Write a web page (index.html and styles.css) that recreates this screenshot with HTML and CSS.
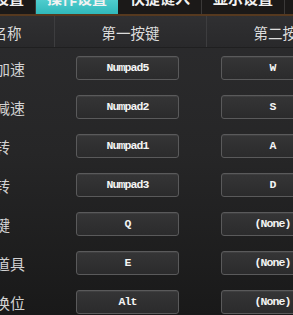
FILE: index.html
```html
<!DOCTYPE html>
<html lang="zh-CN">
<head>
    <meta charset="UTF-8">
    <title>操作设置</title>
    <link rel="stylesheet" href="styles.css">
</head>
<body>

    <div class="panel">

        <div class="tabs">
            <div class="tab">按键设置</div>
            <div class="tab active">操作设置</div>
            <div class="tab">快捷键入</div>
            <div class="tab">显示设置</div>
        </div>

        <div class="head">
            <div class="col name">按键名称</div>
            <div class="col">第一按键</div>
            <div class="col">第二按键</div>
        </div>

        <div class="rows">
            <div class="row">
                <div class="label">向前加速</div>
                <div class="key first"><span class="btn">Numpad5</span></div>
                <div class="key"><span class="btn">W</span></div>
            </div>
            <div class="row">
                <div class="label">向后减速</div>
                <div class="key first"><span class="btn">Numpad2</span></div>
                <div class="key"><span class="btn">S</span></div>
            </div>
            <div class="row">
                <div class="label">向左转</div>
                <div class="key first"><span class="btn">Numpad1</span></div>
                <div class="key"><span class="btn">A</span></div>
            </div>
            <div class="row">
                <div class="label">向右转</div>
                <div class="key first"><span class="btn">Numpad3</span></div>
                <div class="key"><span class="btn">D</span></div>
            </div>
            <div class="row">
                <div class="label">漂移键</div>
                <div class="key first"><span class="btn">Q</span></div>
                <div class="key"><span class="btn">(None)</span></div>
            </div>
            <div class="row">
                <div class="label">使用道具</div>
                <div class="key first"><span class="btn">E</span></div>
                <div class="key"><span class="btn">(None)</span></div>
            </div>
            <div class="row">
                <div class="label">道具换位</div>
                <div class="key first"><span class="btn">Alt</span></div>
                <div class="key"><span class="btn">(None)</span></div>
            </div>
        </div>

    </div>

</body>
</html>
```

FILE: styles.css
```css
body {
    margin: 0;
    background: #181818;
    font-family: "Noto Sans CJK SC", "Noto Sans", sans-serif;
    overflow: hidden;
}

.panel {
    display: flow-root;
    width: 440px;
    min-height: 340px;
    margin-left: -69px;
    background: linear-gradient(#2c2c2e 0%, #262627 45%, #171717 100%);
}

/* tab strip, cut off at the top of the shot */
.tabs {
    display: flex;
    height: 28px;
    margin-top: -14px;
    padding-left: 22px;
    background: #1b1918;
    border-bottom: 2px solid #56391f;
}

.tab {
    width: 82px;
    border-right: 1px solid #3b3938;
    color: #f2f2f2;
    font-size: 15px;
    font-weight: bold;
    line-height: 24px;
    text-align: center;
}

.tab.active {
    background: linear-gradient(#6fe0e0, #30b8ba);
    border-right-color: #1b1918;
}

.head {
    display: flex;
    height: 31px;
    background: linear-gradient(#303032, #29292b);
    border-bottom: 1px solid #1f1f20;
}

.col {
    width: 151px;
    border-right: 1px solid #3d3d3f;
    color: #dcdcdc;
    font-size: 14.5px;
    line-height: 34px;
    text-align: center;
}

.col.name {
    width: 123px;
}

.rows {
    padding-top: 8px;
}

.row {
    display: flex;
    align-items: center;
    height: 24px;
    margin-bottom: 15px;
}

.label {
    width: 124px;
    padding-left: 34px;
    box-sizing: border-box;
    color: #d2d2d2;
    font-size: 15px;
    white-space: nowrap;
}

.key {
    width: 145px;
}

.key.first {
    padding-left: 21px;
}

.btn {
    display: block;
    width: 101px;
    height: 22px;
    border: 1px solid #5a5a5b;
    border-radius: 3px;
    background: linear-gradient(#353536, #2b2b2c);
    box-shadow: inset 0 1px 0 rgba(255, 255, 255, 0.05);
    color: #f4f4f4;
    font-family: "Liberation Mono", monospace;
    font-size: 11.5px;
    font-weight: bold;
    letter-spacing: -0.9px;
    line-height: 22px;
    text-align: center;
}
```
